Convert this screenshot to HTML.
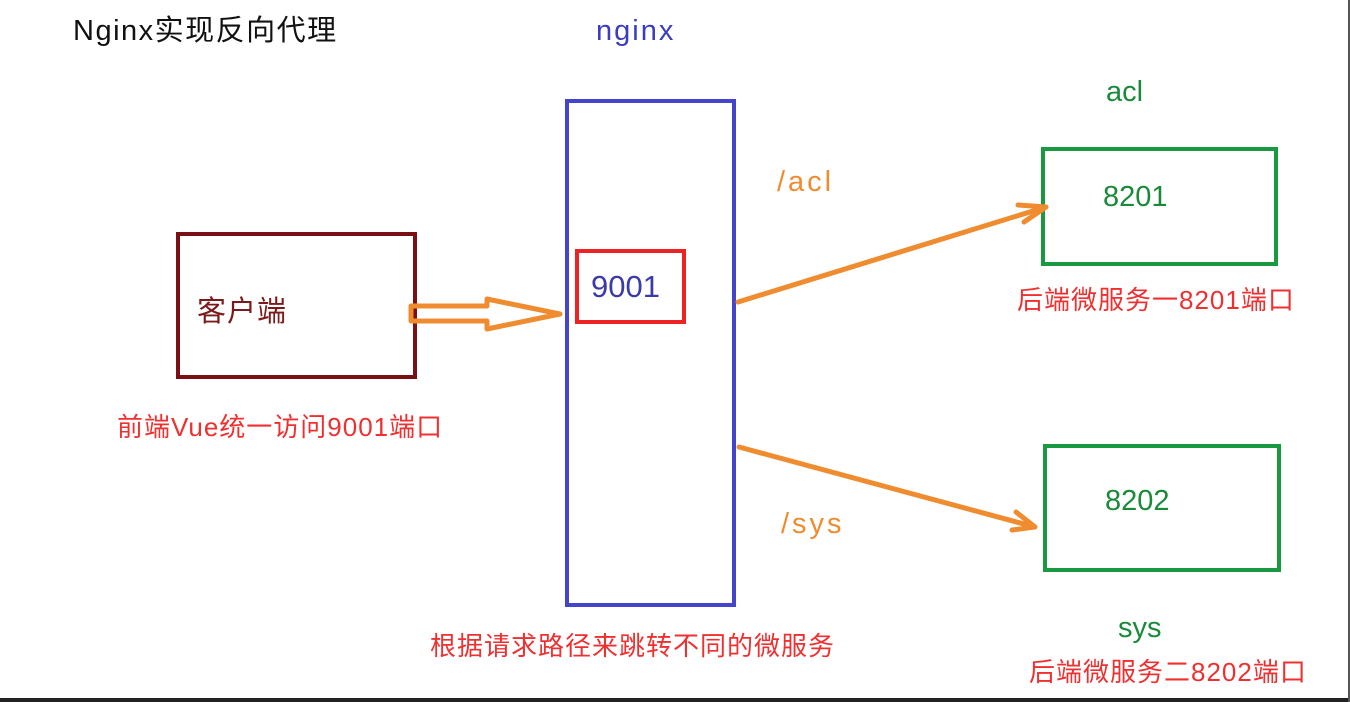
<!DOCTYPE html><html><head><meta charset="utf-8"><style>
body{margin:0;width:1350px;height:702px;background:#fff;position:relative;overflow:hidden;font-family:"Liberation Sans","Noto Sans CJK SC",sans-serif}
.t{position:absolute;white-space:nowrap;line-height:1}
.b{position:absolute;box-sizing:border-box}
</style></head><body>
<div class="t" style="left:73px;top:17px;font-size:29px;letter-spacing:1.5px;color:#111">Nginx实现反向代理</div>
<div class="t" style="left:596px;top:17px;font-size:29px;letter-spacing:2px;color:#3c3cc0">nginx</div>
<div class="b" style="left:565px;top:99px;width:171px;height:508px;border:4px solid #4444cc"></div>
<div class="b" style="left:575px;top:249px;width:111px;height:75px;border:4px solid #ee2222"></div>
<div class="t" style="left:591px;top:271px;font-size:31px;color:#3a3aa8">9001</div>
<div class="b" style="left:176px;top:232px;width:241px;height:147px;border:4px solid #7a0f14"></div>
<div class="t" style="left:197px;top:298px;font-size:29px;letter-spacing:1px;color:#7a1a1a">客户端</div>
<div class="t" style="left:117px;top:414px;font-size:26px;letter-spacing:1px;color:#f03030">前端Vue统一访问9001端口</div>
<div class="t" style="left:777px;top:168px;font-size:29px;letter-spacing:3px;color:#f08c30">/acl</div>
<div class="t" style="left:781px;top:510px;font-size:29px;letter-spacing:3px;color:#f08c30">/sys</div>
<div class="t" style="left:1106px;top:78px;font-size:29px;color:#1a8a3a">acl</div>
<div class="b" style="left:1041px;top:147px;width:237px;height:119px;border:4px solid #1a9a40"></div>
<div class="t" style="left:1103px;top:183px;font-size:29px;color:#1a8a3a">8201</div>
<div class="t" style="left:1017px;top:287px;font-size:26px;letter-spacing:1px;color:#f03030">后端微服务一8201端口</div>
<div class="b" style="left:1043px;top:444px;width:238px;height:128px;border:4px solid #1a9a40"></div>
<div class="t" style="left:1105px;top:487px;font-size:29px;color:#1a8a3a">8202</div>
<div class="t" style="left:1118px;top:614px;font-size:29px;color:#1a8a3a">sys</div>
<div class="t" style="left:1029px;top:659px;font-size:26px;letter-spacing:1px;color:#f03030">后端微服务二8202端口</div>
<div class="t" style="left:430px;top:633px;font-size:26px;letter-spacing:1px;color:#f03030">根据请求路径来跳转不同的微服务</div>
<svg class="b" style="left:0;top:0" width="1350" height="702">
<path d="M411 306 L487 306 L487 299 L560 314 L487 329 L487 321 L411 321 Z" fill="none" stroke="#f08c30" stroke-width="5" stroke-linejoin="round"/>
<path d="M738 302 L1046 207 M1046 207 L1018 205 M1046 207 L1024 222" stroke="#f08c30" stroke-width="5" fill="none" stroke-linecap="round"/>
<path d="M739 447 L1035 527 M1035 527 L1012 530 M1035 527 L1016 512" stroke="#f08c30" stroke-width="5" fill="none" stroke-linecap="round"/>
</svg>
<div class="b" style="left:0;top:698px;width:1350px;height:4px;background:#222"></div>
<div class="b" style="left:1348px;top:0;width:2px;height:702px;background:#555"></div>
</body></html>
